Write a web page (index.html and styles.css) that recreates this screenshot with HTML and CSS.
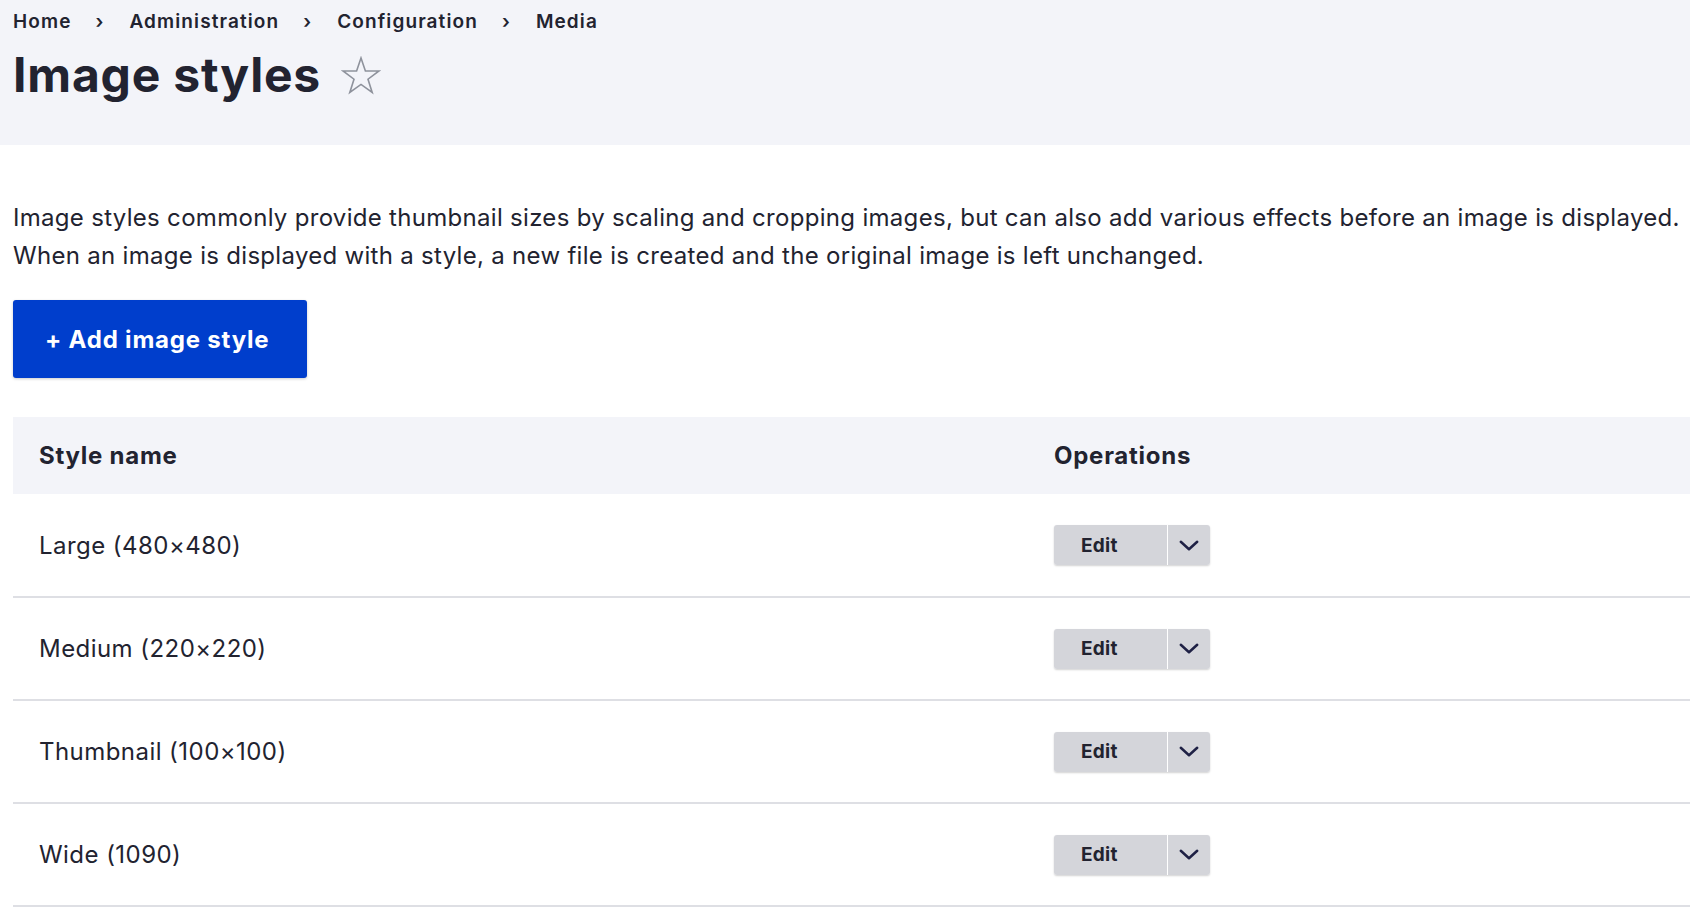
FILE: index.html
```html
<!DOCTYPE html>
<html lang="en">
<head>
<meta charset="utf-8">
<title>Image styles</title>
<link rel="stylesheet" href="styles.css">
</head>
<body>
<header class="page-header">
  <nav class="breadcrumb" aria-label="Breadcrumb">
    <ol class="breadcrumb-list">
      <li class="breadcrumb-item"><a href="#">Home</a></li>
      <li class="breadcrumb-item"><a href="#">Administration</a></li>
      <li class="breadcrumb-item"><a href="#">Configuration</a></li>
      <li class="breadcrumb-item"><a href="#">Media</a></li>
    </ol>
  </nav>
  <div class="title-row">
    <h1 class="page-title">Image styles</h1>
    <svg class="shortcut-star" viewBox="0 0 40 40" width="40" height="40" aria-hidden="true">
      <polygon points="20,2 24.4,15 38,15 27,23.2 31.2,36.5 20,28.4 8.8,36.5 13,23.2 2,15 15.6,15" fill="none" stroke="#8e929c" stroke-width="1.6" stroke-linejoin="miter"/>
    </svg>
  </div>
</header>
<main class="content">
  <p class="description">Image styles commonly provide thumbnail sizes by scaling and cropping images, but can also add various effects before an image is displayed. When an image is displayed with a style, a new file is created and the original image is left unchanged.</p>
  <a class="button-primary" href="#">+ Add image style</a>
  <table class="styles-table">
    <colgroup>
      <col class="col-name">
      <col class="col-ops">
    </colgroup>
    <thead>
      <tr>
        <th>Style name</th>
        <th>Operations</th>
      </tr>
    </thead>
    <tbody>
      <tr>
        <td>Large (480×480)</td>
        <td><div class="dropbutton"><a class="dropbutton-action" href="#">Edit</a><button class="dropbutton-toggle" type="button" aria-label="List additional actions"><svg viewBox="0 0 20 11" width="20" height="11"><path d="M1.8 1.8 L10 9.2 L18.2 1.8" fill="none" stroke="#1f2145" stroke-width="2.5" stroke-linecap="round" stroke-linejoin="round"/></svg></button></div></td>
      </tr>
      <tr>
        <td>Medium (220×220)</td>
        <td><div class="dropbutton"><a class="dropbutton-action" href="#">Edit</a><button class="dropbutton-toggle" type="button" aria-label="List additional actions"><svg viewBox="0 0 20 11" width="20" height="11"><path d="M1.8 1.8 L10 9.2 L18.2 1.8" fill="none" stroke="#1f2145" stroke-width="2.5" stroke-linecap="round" stroke-linejoin="round"/></svg></button></div></td>
      </tr>
      <tr>
        <td>Thumbnail (100×100)</td>
        <td><div class="dropbutton"><a class="dropbutton-action" href="#">Edit</a><button class="dropbutton-toggle" type="button" aria-label="List additional actions"><svg viewBox="0 0 20 11" width="20" height="11"><path d="M1.8 1.8 L10 9.2 L18.2 1.8" fill="none" stroke="#1f2145" stroke-width="2.5" stroke-linecap="round" stroke-linejoin="round"/></svg></button></div></td>
      </tr>
      <tr>
        <td>Wide (1090)</td>
        <td><div class="dropbutton"><a class="dropbutton-action" href="#">Edit</a><button class="dropbutton-toggle" type="button" aria-label="List additional actions"><svg viewBox="0 0 20 11" width="20" height="11"><path d="M1.8 1.8 L10 9.2 L18.2 1.8" fill="none" stroke="#1f2145" stroke-width="2.5" stroke-linecap="round" stroke-linejoin="round"/></svg></button></div></td>
      </tr>
    </tbody>
  </table>
</main>
</body>
</html>
```

FILE: styles.css
```css
* { box-sizing: border-box; }

html, body {
  margin: 0;
  padding: 0;
  background: #ffffff;
}

body {
  font-family: Inter, "Noto Sans", "Liberation Sans", sans-serif;
  color: #222330;
  overflow: hidden;
}

a { color: inherit; text-decoration: none; }

.page-header {
  background: #f3f4f9;
  height: 145px;
  padding: 8px 13px 0;
}

.breadcrumb-list {
  list-style: none;
  margin: 0;
  padding: 0;
  display: flex;
  align-items: center;
  font-size: 19px;
  font-weight: 600;
  line-height: 27px;
  letter-spacing: 1.1px;
}

.breadcrumb-item + .breadcrumb-item::before {
  content: "›";
  display: inline-block;
  margin: 0 25px 0 24px;
  font-weight: 600;
}

.title-row {
  display: flex;
  align-items: center;
  gap: 20px;
  margin-top: 11px;
}

.page-title {
  margin: 0;
  font-size: 48px;
  font-weight: 700;
  line-height: 58px;
  letter-spacing: 0.8px;
}

.shortcut-star {
  display: block;
  margin-top: 2px;
}

.content {
  padding: 0 0 0 13px;
}

.description {
  margin: 54px 0 0;
  font-size: 24px;
  line-height: 38px;
  letter-spacing: 0.3px;
  max-width: 1677px;
}

.button-primary {
  display: inline-flex;
  align-items: center;
  justify-content: flex-start;
  margin-top: 25px;
  height: 78px;
  width: 294px;
  padding-left: 32px;
  background: #003ecc;
  color: #ffffff;
  font-size: 24px;
  font-weight: 700;
  letter-spacing: 0.8px;
  border-radius: 3px;
  box-shadow: 0 1px 3px rgba(0, 0, 0, 0.2);
}

.styles-table {
  margin-top: 39px;
  width: calc(100% + 30px);
  border-collapse: collapse;
  table-layout: fixed;
}

.col-name { width: 1015px; }

.styles-table th {
  background: #f3f4f9;
  height: 77px;
  text-align: left;
  padding: 0 26px;
  font-size: 24px;
  font-weight: 700;
  letter-spacing: 0.75px;
}

.styles-table td {
  height: 103px;
  padding: 0 26px;
  font-size: 24px;
  letter-spacing: 0.45px;
  border-bottom: 2px solid #dedfe4;
}

.dropbutton {
  display: inline-flex;
  height: 40px;
  border-radius: 3px;
  overflow: hidden;
  box-shadow: 0 1px 2px rgba(0, 0, 0, 0.18);
  vertical-align: middle;
  letter-spacing: 0.3px;
}

.dropbutton-action {
  display: flex;
  align-items: center;
  justify-content: flex-start;
  width: 113px;
  padding-left: 27px;
  background: #d4d5da;
  font-size: 19px;
  font-weight: 700;
  color: #222330;
}

.dropbutton-toggle {
  display: flex;
  align-items: center;
  justify-content: center;
  width: 42px;
  margin: 0 0 0 1px;
  padding: 0;
  border: 0;
  background: #d4d5da;
}

.dropbutton-toggle svg { display: block; }
```
